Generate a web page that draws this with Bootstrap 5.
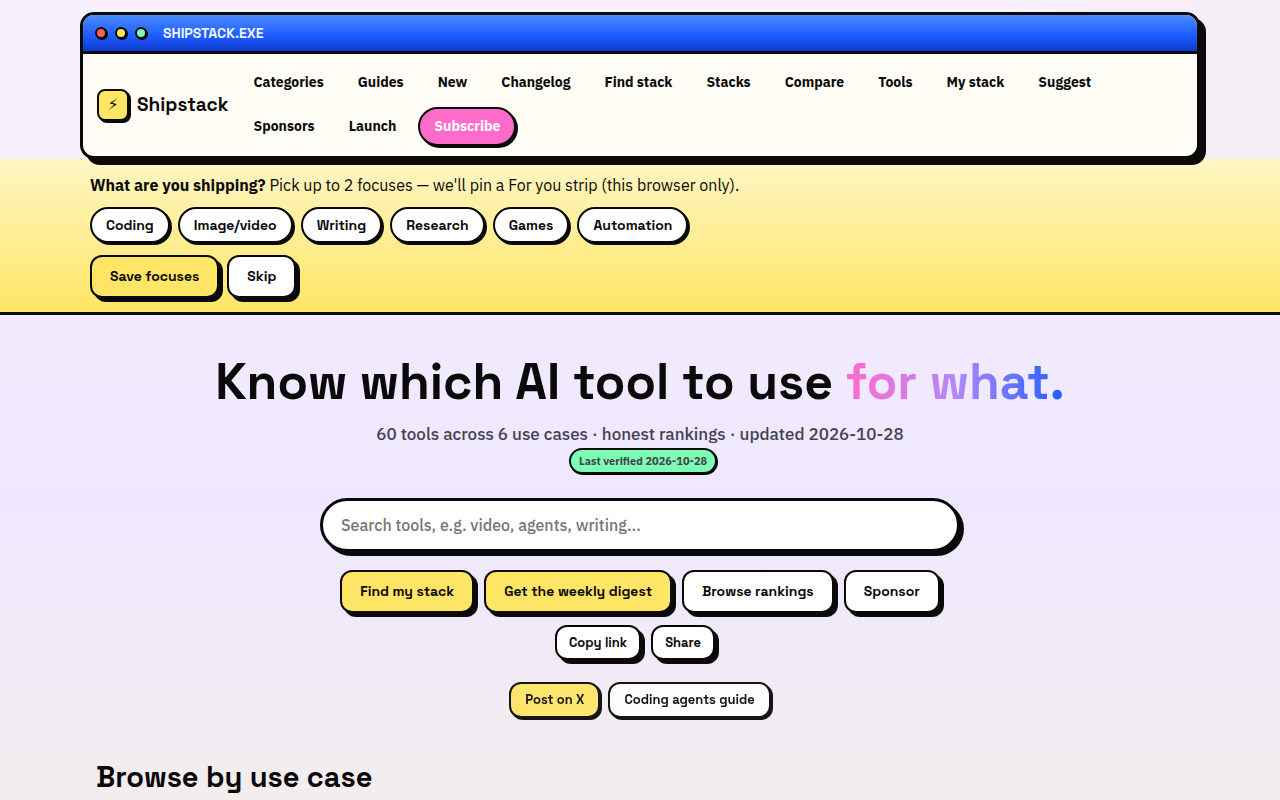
<!DOCTYPE html>
<html lang="en">
<head>
<meta charset="utf-8">
<meta name="viewport" content="width=device-width, initial-scale=1">
<title>Shipstack</title>
<link href="https://cdn.jsdelivr.net/npm/bootstrap@5.3.0/dist/css/bootstrap.min.css" rel="stylesheet">
<style>
:root {
  --ink: #0a0a0a;
  --sun: #ffe566;
  --pink: #ff6bcb;
  --mint: #7dffb3;
  --blue: #1f5eff;
  --display: "Space Grotesk", Inter, sans-serif;
  --text: "IBM Plex Sans", Roboto, sans-serif;
}
body {
  font-family: var(--text);
  font-size: 16px;
  line-height: 24px;
  color: var(--ink);
  background:
    radial-gradient(360px 240px at 100% 80px, rgba(244, 236, 240, .8), transparent),
    linear-gradient(180deg, #f7f1ff 0, #f5effe 160px, #f1ebff 320px, #efe7ff 500px, #f4edee 800px);
  min-height: 100vh;
}
.site-head { padding-top: 12px; }
.shell { max-width: 1120px; }
.win { border: 3px solid var(--ink); border-radius: 14px; box-shadow: 6px 6px 0 var(--ink); background: #fffdf5; }
.win-bar {
  height: 39px; padding: 0 12px;
  border-bottom: 3px solid var(--ink);
  border-radius: 11px 11px 0 0;
  background: linear-gradient(180deg, #4d8dff 0%, #1f5eff 55%, #0d3bd1 100%);
}
.win-title { font-family: var(--display); font-size: 14px; font-weight: 700; line-height: 18px; color: #f0f4ff; }
.dot { width: 12px; height: 12px; border: 2px solid var(--ink); border-radius: 50%; box-shadow: 1px 1px 0 var(--ink); }
.dot-close { background: #ff5f57; }
.dot-min { background: var(--sun); }
.dot-max { background: var(--mint); }
.win-body { gap: 9px; padding: 9px 14px 10px; }
.brand { font-family: var(--display); font-weight: 700; font-size: 19px; color: var(--ink); }
.brand-mark { width: 32px; height: 32px; border: 2px solid var(--ink); border-radius: 8px; background: var(--sun); box-shadow: 2px 2px 0 var(--ink); font-family: "DejaVu Sans", sans-serif; font-weight: 400; font-size: 16px; line-height: 28px; }
.site-nav { gap: 5px 2px; }
.site-nav .nav-link { padding: 8px 14px; border: 2px solid transparent; font-size: 14px; line-height: 19px; font-weight: 700; color: var(--ink); }
.site-nav .cta { color: #fff; background: var(--pink); border-color: var(--ink); border-radius: 20px; box-shadow: 2px 2px 0 var(--ink); }
.focus-bar { padding: 14px 0; border-bottom: 3px solid var(--ink); background: linear-gradient(180deg, #fff6c4, #ffe566); }
.focus-inner { max-width: 1100px; }
.lead-in { margin-bottom: 10px; }
.btn {
  --bs-btn-color: var(--ink); --bs-btn-bg: #fff; --bs-btn-border-color: var(--ink);
  --bs-btn-hover-color: var(--ink); --bs-btn-hover-bg: #fff; --bs-btn-hover-border-color: var(--ink);
  --bs-btn-active-color: var(--ink); --bs-btn-active-bg: var(--sun); --bs-btn-active-border-color: var(--ink);
  font-family: var(--display); font-weight: 700; font-size: 14px; line-height: 19px;
  padding: 10px 18px; border-width: 2px; border-radius: 12px; box-shadow: 4px 4px 0 var(--ink);
}
.btn-sun { --bs-btn-bg: var(--sun); --bs-btn-hover-bg: var(--sun); }
.btn-chip { padding: 7px 14px; line-height: 18px; border-radius: 18px; box-shadow: 2px 2px 0 var(--ink); }
.btn-mini { padding: 6px 12px; font-size: 13px; }
.btn-soft { padding: 7px 14px; font-size: 13px; line-height: 18px; box-shadow: 2px 2px 0 var(--ink); }
.hero { padding-top: 39px; }
.hero h1 { font-family: var(--display); font-weight: 700; font-size: 50px; line-height: 57px; margin-bottom: 10px; }
.grad { background: linear-gradient(90deg, var(--pink), #b388ff 50%, var(--blue)); -webkit-background-clip: text; background-clip: text; color: transparent; }
.sub { max-width: 640px; font-size: 17px; font-weight: 500; line-height: 27px; color: #45424f; margin-bottom: 20px; }
.verified { display: inline-block; margin: 0 0 4px 6px; padding: 2px 8px; border: 2px solid var(--ink); border-radius: 13px; font-size: 11px; line-height: 18px; font-weight: 700; background: var(--mint); box-shadow: 1px 1px 0 var(--ink); vertical-align: middle; }
.search { max-width: 640px; }
.search .form-control { padding: 12px 18px; border: 3px solid var(--ink); border-radius: 27px; box-shadow: 4px 4px 0 var(--ink); font-size: 16px; line-height: 24px; font-weight: 500; color: var(--ink); }
.search .form-control::placeholder { color: #757575; opacity: 1; }
.gap-10 { gap: 10px; }
.actions { margin-top: 18px; }
.shares { margin-top: 12px; }
.extras { margin-top: 22px; opacity: .95; }
.browse { max-width: 1088px; margin-top: 39px; }
.browse h2 { font-family: var(--display); font-weight: 700; font-size: 29px; line-height: 40px; }
</style>
</head>
<body>
<header class="site-head position-relative z-1">
  <div class="shell mx-auto">
    <div class="win">
      <div class="win-bar d-flex align-items-center gap-2">
        <span class="dot dot-close"></span>
        <span class="dot dot-min"></span>
        <span class="dot dot-max"></span>
        <span class="win-title ms-2">SHIPSTACK.EXE</span>
      </div>
      <div class="win-body d-flex align-items-center">
        <a class="brand d-flex align-items-center gap-2 text-decoration-none" href="#">
          <span class="brand-mark d-flex align-items-center justify-content-center" aria-hidden="true">⚡</span>
          Shipstack
        </a>
        <nav class="site-nav nav flex-grow-1" aria-label="Main">
          <a class="nav-link" href="#">Categories</a>
          <a class="nav-link" href="#">Guides</a>
          <a class="nav-link" href="#">New</a>
          <a class="nav-link" href="#">Changelog</a>
          <a class="nav-link" href="#">Find stack</a>
          <a class="nav-link" href="#">Stacks</a>
          <a class="nav-link" href="#">Compare</a>
          <a class="nav-link" href="#">Tools</a>
          <a class="nav-link" href="#">My stack</a>
          <a class="nav-link" href="#">Suggest</a>
          <a class="nav-link" href="#">Sponsors</a>
          <a class="nav-link" href="#">Launch</a>
          <a class="nav-link cta ms-1" href="#">Subscribe</a>
        </nav>
      </div>
    </div>
  </div>
</header>

<section class="focus-bar">
  <div class="focus-inner mx-auto">
    <p class="lead-in"><strong>What are you shipping?</strong> Pick up to 2 focuses — we'll pin a For you strip (this browser only).</p>
    <div class="d-flex flex-wrap gap-2">
      <button type="button" class="btn btn-chip">Coding</button>
      <button type="button" class="btn btn-chip">Image/video</button>
      <button type="button" class="btn btn-chip">Writing</button>
      <button type="button" class="btn btn-chip">Research</button>
      <button type="button" class="btn btn-chip">Games</button>
      <button type="button" class="btn btn-chip">Automation</button>
    </div>
    <div class="d-flex flex-wrap gap-2 shares">
      <button type="button" class="btn btn-sun">Save focuses</button>
      <button type="button" class="btn">Skip</button>
    </div>
  </div>
</section>

<main>
  <section class="hero text-center">
    <h1>Know which AI tool to use <span class="grad">for what.</span></h1>
    <p class="sub mx-auto">60 tools across 6 use cases · honest rankings · updated 2026-10-28 <span class="verified">Last verified 2026-10-28</span></p>
    <form class="search mx-auto" role="search">
      <input id="q" type="search" class="form-control" aria-label="Search tools" placeholder="Search tools, e.g. video, agents, writing...">
    </form>
    <div class="actions d-flex flex-wrap justify-content-center gap-10">
      <a class="btn btn-sun" href="#">Find my stack</a>
      <a class="btn btn-sun" href="#">Get the weekly digest</a>
      <a class="btn" href="#">Browse rankings</a>
      <a class="btn" href="#">Sponsor</a>
    </div>
    <div class="shares d-flex flex-wrap justify-content-center gap-10">
      <button type="button" class="btn btn-mini">Copy link</button>
      <button type="button" class="btn btn-mini">Share</button>
      <span role="status"></span>
    </div>
    <div class="extras d-flex flex-wrap justify-content-center gap-2">
      <a class="btn btn-soft btn-sun" href="#">Post on X</a>
      <a class="btn btn-soft" href="#">Coding agents guide</a>
    </div>
  </section>
  <section class="browse mx-auto">
    <h2>Browse by use case</h2>
  </section>
</main>
<script src="https://cdn.jsdelivr.net/npm/bootstrap@5.3.0/dist/js/bootstrap.bundle.min.js"></script>
</body>
</html>
